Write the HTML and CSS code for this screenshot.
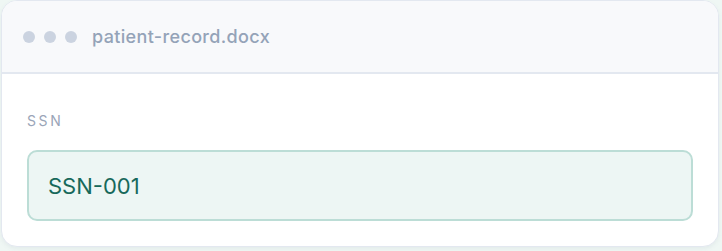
FILE: index.html
```html
<!DOCTYPE html>
<html>
<head>
<meta charset="utf-8">
<link rel="stylesheet" href="styles.css">
</head>
<body>
<div class="card">
  <div class="header">
    <div class="dots"><span class="dot"></span><span class="dot"></span><span class="dot"></span></div>
    <div class="filename">patient-record.docx</div>
  </div>
  <div class="body">
    <div class="label">SSN</div>
    <div class="field">SSN-001</div>
  </div>
</div>
</body>
</html>
```
FILE: styles.css
```css
html, body { margin: 0; padding: 0; }
body {
  background: #eff7f4;
  font-family: Inter, "Noto Sans", sans-serif;
  width: 722px;
  height: 251px;
  overflow: hidden;
}
.card {
  box-sizing: border-box;
  margin: 0 3px 0 1px;
  width: 718px;
  height: 247px;
  background: #ffffff;
  border: 1px solid #e3e8f0;
  border-radius: 16px;
  overflow: hidden;
  box-shadow: 0 2px 4px rgba(100, 116, 139, 0.08);
}
.header {
  box-sizing: border-box;
  height: 73px;
  background: #f8f9fb;
  border-bottom: 2px solid #e3e8f0;
  display: flex;
  align-items: center;
  padding-left: 21px;
  gap: 15px;
}
.dots { display: flex; gap: 9px; }
.dot { width: 12px; height: 12px; border-radius: 50%; background: #cbd3e0; }
.filename { font-size: 18px; letter-spacing: 0.35px; color: #94a3b8; font-weight: 500; margin-top: -1px; }
.body { padding: 39px 25px 0 25px; }
.label {
  font-size: 14px;
  letter-spacing: 2.6px;
  color: #9aa5b8;
  line-height: 16px;
  font-weight: 400;
}
.field {
  margin-top: 21px;
  box-sizing: border-box;
  height: 71px;
  background: #edf6f4;
  border: 2px solid #bcddd6;
  border-radius: 10px;
  display: flex;
  align-items: center;
  padding-left: 19px;
  font-size: 22px;
  color: #17695b;
}
```
